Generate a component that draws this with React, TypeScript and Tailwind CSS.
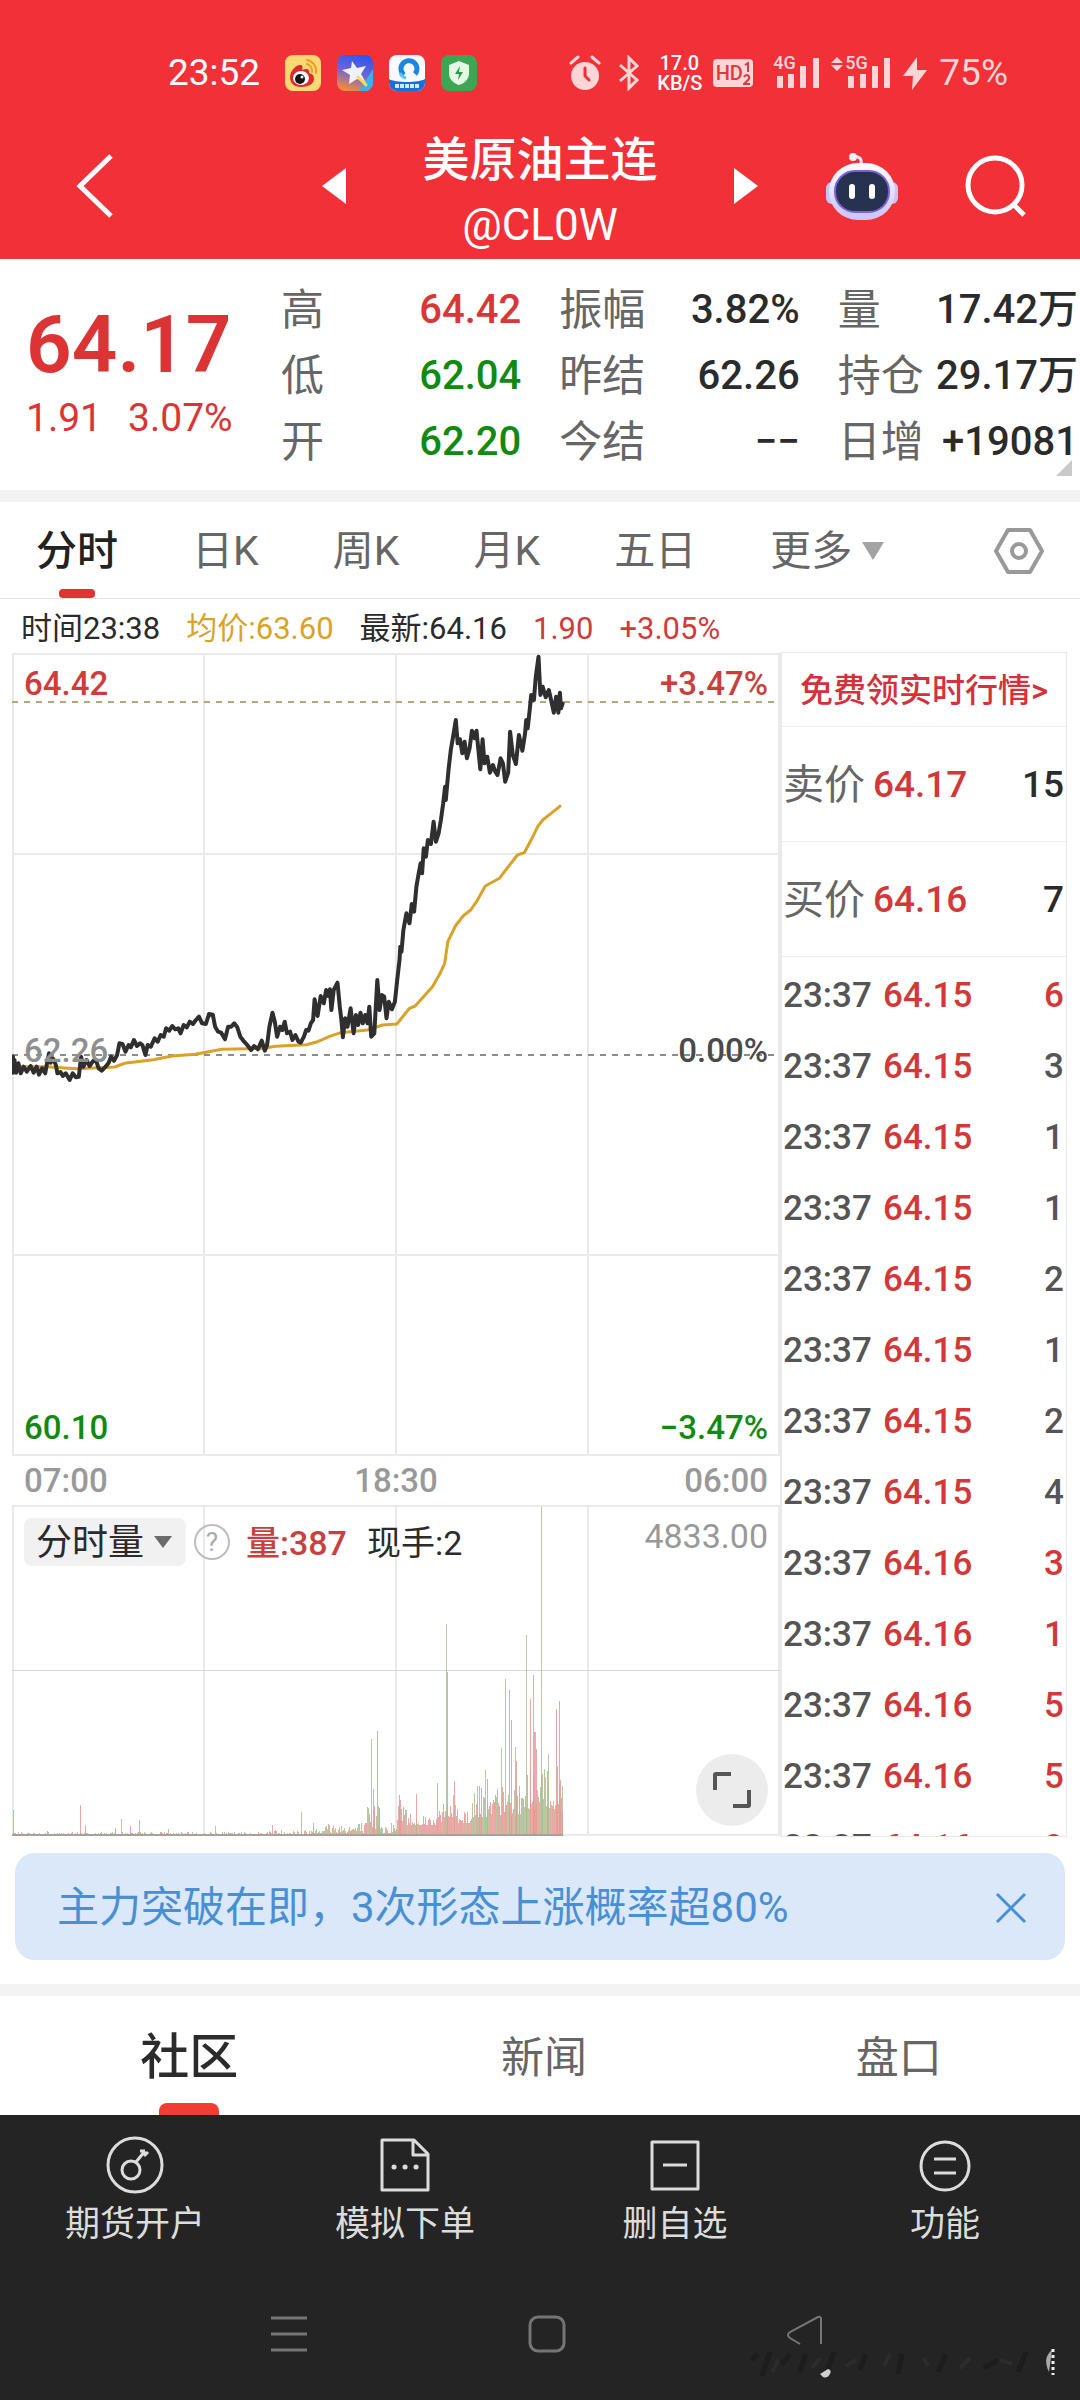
import React from 'react';

type Point = [number, number];

const stats = [
  [
    { label: '高', value: '64.42', color: 'text-[#d93636]' },
    { label: '低', value: '62.04', color: 'text-[#128a12]' },
    { label: '开', value: '62.20', color: 'text-[#128a12]' },
  ],
  [
    { label: '振幅', value: '3.82%', color: 'text-[#2b2b2b]' },
    { label: '昨结', value: '62.26', color: 'text-[#2b2b2b]' },
    { label: '今结', value: '−−', color: 'text-[#2b2b2b]' },
  ],
  [
    { label: '量', value: '17.42万', color: 'text-[#2b2b2b]' },
    { label: '持仓', value: '29.17万', color: 'text-[#2b2b2b]' },
    { label: '日增', value: '+19081', color: 'text-[#2b2b2b]' },
  ],
];

const ticks = [
  { price: '64.15', qty: 6, up: true },
  { price: '64.15', qty: 3, up: false },
  { price: '64.15', qty: 1, up: false },
  { price: '64.15', qty: 1, up: false },
  { price: '64.15', qty: 2, up: false },
  { price: '64.15', qty: 1, up: false },
  { price: '64.15', qty: 2, up: false },
  { price: '64.15', qty: 4, up: false },
  { price: '64.16', qty: 3, up: true },
  { price: '64.16', qty: 1, up: true },
  { price: '64.16', qty: 5, up: true },
  { price: '64.16', qty: 5, up: true },
  { price: '64.16', qty: 9, up: true },
];

// Raw series, scaled down to chart units by toPath
const priceSeries: Point[] = [
  [34, 1250], [34, 1298], [38, 1260], [42, 1298], [48, 1270], [54, 1300], [62, 1280], [70, 1295], [80, 1278], [88, 1298],
  [96, 1280], [102, 1304], [110, 1285], [118, 1300], [124, 1262], [128, 1240], [132, 1268], [138, 1255], [146, 1275], [150, 1300],
  [158, 1296], [164, 1308], [172, 1300], [182, 1320], [190, 1300], [198, 1312], [206, 1310], [212, 1250], [218, 1280], [226, 1260],
  [234, 1278], [244, 1262], [252, 1265], [258, 1285], [266, 1292], [276, 1280], [284, 1268], [290, 1250], [298, 1262], [306, 1245],
  [312, 1210], [320, 1212], [328, 1235], [336, 1215], [342, 1222], [350, 1200], [358, 1218], [366, 1210], [372, 1215], [380, 1245],
  [386, 1215], [394, 1220], [404, 1195], [412, 1205], [420, 1185], [428, 1190], [434, 1165], [442, 1172], [450, 1158], [458, 1168],
  [466, 1165], [472, 1180], [480, 1155], [488, 1162], [496, 1145], [504, 1152], [512, 1140], [520, 1130], [528, 1150], [538, 1152],
  [546, 1122], [556, 1124], [562, 1160], [570, 1175], [578, 1178], [588, 1198], [596, 1160], [604, 1160], [612, 1150], [620, 1162],
  [628, 1190], [638, 1205], [646, 1215], [656, 1230], [664, 1218], [674, 1228], [684, 1202], [692, 1232], [698, 1215], [704, 1160],
  [712, 1118], [718, 1145], [724, 1190], [732, 1160], [738, 1170], [744, 1145], [750, 1180], [758, 1175], [764, 1200], [772, 1185],
  [780, 1205], [786, 1208], [794, 1190], [800, 1170], [806, 1172], [812, 1150], [818, 1140], [822, 1078], [830, 1128], [838, 1068],
  [846, 1090], [852, 1050], [858, 1068], [862, 1048], [866, 1110], [872, 1050], [882, 1028], [888, 1100], [892, 1140], [896, 1192],
  [902, 1135], [908, 1160], [916, 1105], [924, 1180], [930, 1125], [936, 1155], [942, 1118], [948, 1150], [954, 1125], [960, 1150],
  [965, 1100], [970, 1190], [978, 1180], [986, 1020], [992, 1110], [998, 1065], [1004, 1070], [1010, 1135], [1016, 1085], [1024, 1108],
  [1032, 1085], [1038, 1020], [1044, 960], [1046, 920], [1049, 935], [1054, 870], [1062, 820], [1070, 850], [1076, 792], [1082, 815],
  [1088, 740], [1094, 700], [1099, 670], [1103, 700], [1107, 625], [1113, 650], [1118, 600], [1126, 612], [1133, 545], [1139, 605],
  [1146, 580], [1152, 540], [1158, 490], [1163, 440], [1165, 480], [1172, 390], [1178, 330], [1184, 290], [1191, 240], [1196, 310],
  [1202, 298], [1208, 340], [1214, 305], [1220, 355], [1227, 325], [1233, 272], [1240, 295], [1245, 272], [1250, 330], [1255, 388],
  [1261, 298], [1266, 370], [1273, 350], [1280, 398], [1288, 375], [1294, 395], [1300, 405], [1308, 355], [1314, 370], [1320, 425],
  [1328, 398], [1333, 275], [1340, 345], [1348, 372], [1356, 285], [1365, 332], [1372, 280], [1375, 240], [1379, 265], [1384, 210],
  [1388, 165], [1395, 180], [1400, 110], [1407, 50], [1412, 165], [1418, 140], [1426, 172], [1434, 150], [1440, 180], [1447, 218],
  [1453, 170], [1459, 218], [1463, 158], [1466, 205], [1470, 190],
];

const averageSeries: Point[] = [
  [34, 1280], [120, 1280], [200, 1286], [300, 1281], [325, 1270], [400, 1259], [450, 1248], [510, 1243], [580, 1228], [650, 1226],
  [690, 1225], [720, 1219], [800, 1214], [830, 1205], [860, 1190], [890, 1178], [960, 1170], [1000, 1155], [1037, 1152], [1070, 1105],
  [1085, 1098], [1130, 1040], [1150, 1000], [1162, 970], [1170, 905], [1190, 858], [1210, 828], [1230, 810], [1245, 785], [1268, 738],
  [1305, 715], [1320, 692], [1352, 645], [1370, 638], [1390, 595], [1405, 560], [1418, 540], [1440, 520], [1466, 496],
];

const toPath = (series: Point[]) =>
  series.map(([x, y]) => `${(x / 2.613 - 12).toFixed(1)},${(y / 3 - 12).toFixed(1)}`).join(' ');

// x, height, 1 = up (red) / 0 = down (green)
const spikes: [number, number, number][] = [
  [1, 26, 1], [35, 5, 1], [68, 31, 1], [73, 11, 1], [103, 8, 1], [109, 17, 0], [118, 10, 1], [127, 16, 1], [156, 7, 0],
  [203, 10, 0], [260, 11, 1], [289, 24, 0], [301, 13, 1], [359, 97, 0], [361, 47, 1], [362, 30, 1], [365, 105, 1], [366, 30, 0], [367, 28, 1],
  [387, 41, 1], [388, 36, 1], [404, 42, 1], [425, 53, 1], [434, 212, 0], [435, 164, 1], [442, 55, 1], [465, 50, 0], [467, 50, 1],
  [469, 48, 1], [473, 66, 0], [475, 57, 1], [489, 88, 0], [493, 157, 0], [497, 146, 1], [499, 116, 1], [503, 89, 0], [504, 75, 1],
  [507, 50, 0], [514, 201, 0], [518, 137, 1], [521, 161, 1], [522, 104, 1], [523, 104, 0], [524, 87, 1], [529, 329, 0], [530, 62, 0],
  [536, 82, 0], [535, 65, 1], [544, 127, 1], [545, 70, 0], [547, 135, 1], [548, 56, 1], [550, 24, 1],
];

const envelope = (x: number) => {
  if (x < 255) return 3;
  if (x < 300) return 6;
  if (x < 355) return 14;
  if (x < 363) return 30;
  if (x < 371) return 36;
  if (x < 385) return 14;
  if (x < 395) return 36;
  if (x < 407) return 24;
  if (x < 430) return 24;
  if (x < 446) return 42;
  if (x < 460) return 30;
  if (x < 482) return 44;
  if (x < 510) return 50;
  return 66;
};

const buildVolume = () => {
  const bars: [number, number, number][] = [];
  let seed = 7;
  const rand = () => {
    seed = (seed * 1103515245 + 12345) % 2147483648;
    return seed / 2147483648;
  };
  for (let x = 0; x < 551; x++) {
    const r = rand();
    const max = envelope(x);
    const base = x < 385 ? 0.15 : 0.4;
    const red = x > 385 && x < 450 ? 0.25 : 0.5;
    bars.push([x, Math.round(1 + max * base + max * (1 - base) * r * r), rand() > red ? 1 : 0]);
  }
  return bars.concat(spikes);
};

const volumeBars = buildVolume();

const StatusBar = () => (
  <div className="flex h-28 items-center pt-[34px] pl-[168px] pr-[72px] text-white">
    <span className="w-[93px] text-[37px] leading-10">23:52</span>
    <div className="ml-6 flex gap-4">
      <svg className="size-9" viewBox="0 0 36 36">
        <rect width="36" height="36" rx="8" fill="#fbd873" />
        <path d="M22 5a11 11 0 0 1 9 13M22 9a7 7 0 0 1 5 8" fill="none" stroke="#f29b2c" strokeWidth="2" strokeLinecap="round" />
        <path d="M5 22c0-6 6-12 10-12 3 0 3 2 2 5 5-2 8-1 7 3 4 1 5 3 5 6 0 5-6 8-13 8S5 28 5 22z" fill="#dd2a2c" />
        <ellipse cx="16" cy="23" rx="8" ry="7" fill="#fff" />
        <circle cx="15" cy="24" r="5" fill="#151515" />
        <circle cx="17" cy="22" r="1.5" fill="#fff" />
      </svg>
      <svg className="size-9" viewBox="0 0 36 36">
        <defs>
          <linearGradient id="starBg" x1="0.7" y1="0" x2="0.4" y2="1">
            <stop offset="0" stopColor="#2c56ee" />
            <stop offset="0.5" stopColor="#6d63d8" />
            <stop offset="1" stopColor="#f28a3c" />
          </linearGradient>
        </defs>
        <rect width="36" height="36" rx="8" fill="url(#starBg)" />
        <path d="M36 14v14a8 8 0 0 1-8 8h-6z" fill="#36b2ee" />
        <path d="M15 6l5 7 9-2-5 8 5 9-9-4-8 5 1-9-8-5 9-2z" fill="#eef3fb" />
        <path d="M21 22l8 8" stroke="#ffd95c" strokeWidth="3" strokeLinecap="round" />
      </svg>
      <svg className="size-9" viewBox="0 0 36 36">
        <rect width="36" height="36" rx="8" fill="#f7fbff" />
        <path d="M0 24c6 4 30 4 36 0v4a8 8 0 0 1-8 8H8a8 8 0 0 1-8-8z" fill="#1c6fd9" />
        <path d="M15 20a8 8 0 1 1 11-1" fill="none" stroke="#1a86e4" strokeWidth="5" />
        <path d="M11 18a8 8 0 0 0 6 5" fill="none" stroke="#5cc3f5" strokeWidth="3" />
        <path d="M6 31h24" stroke="#d7e9ff" strokeWidth="4" strokeDasharray="4 1" />
      </svg>
      <svg className="size-9" viewBox="0 0 36 36">
        <rect width="36" height="36" rx="8" fill="#3da653" />
        <path d="M18 6l10 4v8c0 6-4 10-10 12C12 28 8 24 8 18v-8z" fill="#e4f8e4" />
        <path d="M19 11l-5 8h4l-1 6 5-8h-4z" fill="#2f9a48" />
      </svg>
    </div>
    <div className="ml-auto flex items-center text-[#ffd5d6]">
      <svg className="h-9 w-8" viewBox="0 0 32 36">
        <circle cx="16" cy="21" r="14" fill="currentColor" />
        <path d="M2 8l7-6M30 8l-7-6" stroke="currentColor" strokeWidth="3" strokeLinecap="round" />
        <path d="M16 13v8l4 4" fill="none" stroke="#f03038" strokeWidth="3" strokeLinecap="round" />
      </svg>
      <svg className="ml-4 h-9 w-6" viewBox="0 0 24 36" fill="none" stroke="currentColor" strokeWidth="3">
        <path d="M3 10l17 15-8 8V3l8 8L3 26" />
      </svg>
      <div className="ml-4 w-11 text-center text-[20px] leading-5 font-medium text-white">
        <div>17.0</div>
        <div>KB/S</div>
      </div>
      <div className="ml-3 flex h-7 w-10 items-center justify-center rounded bg-[#ffd5d6] text-[#dd3a40]">
        <span className="text-[20px] leading-6 font-medium">HD</span>
        <svg className="h-6 w-2" viewBox="0 0 8 24" fill="none" stroke="currentColor" strokeWidth="2">
          <path d="M2 4l3-2v9M1 16q1-2 3-2 3 1 2 4l-5 5h6" />
        </svg>
      </div>
      <div className="relative ml-5">
        <svg className="h-9 w-12" viewBox="0 0 48 36" fill="currentColor">
          <path d="M4 21h6v12H4zM15 19h6v14h-6zM27 11h6v22h-6zM40 3h6v30h-6z" />
        </svg>
        <span className="absolute -top-0.5 left-0 text-[18px] leading-5 font-medium">4G</span>
      </div>
      <div className="relative ml-2.5">
        <svg className="h-9 w-[62px]" viewBox="0 0 62 36" fill="currentColor">
          <path d="M6 2l6 6H0zM6 16l6-6H0zM17 21h6v12h-6zM29 19h6v14h-6zM41 11h6v22h-6zM53 3h6v30h-6z" />
        </svg>
        <span className="absolute -top-0.5 left-3.5 text-[18px] leading-5 font-medium">5G</span>
      </div>
      <svg className="ml-2.5 h-9 w-6" viewBox="0 0 24 36" fill="currentColor">
        <path d="M14 2L0 21h10L9 35l15-20H14z" />
      </svg>
      <span className="ml-3 text-[37px] leading-10">75%</span>
    </div>
  </div>
);

const Header = () => (
  <header className="bg-[#f13037]">
    <StatusBar />
    <div className="grid h-[147px] grid-cols-[1fr_auto_1fr] items-center">
      <button aria-label="返回" className="ml-[75px] w-10">
        <svg className="h-16 w-10" viewBox="0 0 40 64" fill="none" stroke="#fff" strokeWidth="5">
          <path d="M36 2L5 32l31 30" />
        </svg>
      </button>
      <div className="flex w-[436px] items-center justify-between text-white">
        <button aria-label="上一个">
          <svg className="h-9 w-6" viewBox="0 0 24 36" fill="#fff"><path d="M24 0v36L0 18z" /></svg>
        </button>
        <div className="pt-2.5 text-center">
          <h1 className="text-[47px] leading-[68px] font-medium">美原油主连</h1>
          <div className="text-[44px] leading-[62px]">@CL0W</div>
        </div>
        <button aria-label="下一个">
          <svg className="h-9 w-6" viewBox="0 0 24 36" fill="#fff"><path d="M0 0v36l24-18z" /></svg>
        </button>
      </div>
      <div className="flex items-center justify-end gap-[66px] pr-[52px]">
        <button aria-label="智能助手">
          <svg className="h-[68px] w-[72px]" viewBox="0 0 72 68">
            <defs>
              <linearGradient id="botHead" x1="0" y1="0" x2="0" y2="1">
                <stop offset="0" stopColor="#ffffff" />
                <stop offset="1" stopColor="#c9c3fb" />
              </linearGradient>
            </defs>
            <path d="M35 12c1-5-1-7-7-8" fill="none" stroke="#f3e8f6" strokeWidth="3" />
            <circle cx="27" cy="5" r="4" fill="#f6eef8" />
            <rect x="0" y="30" width="12" height="22" rx="6" fill="#c9c3fb" />
            <rect x="60" y="30" width="12" height="22" rx="6" fill="#c9c3fb" />
            <rect x="3" y="11" width="66" height="57" rx="29" fill="url(#botHead)" />
            <rect x="9" y="19" width="54" height="41" rx="20" fill="#26324f" stroke="#7b62d8" strokeWidth="2" />
            <rect x="23" y="32" width="6" height="15" rx="3" fill="#fff" />
            <rect x="43" y="32" width="6" height="15" rx="3" fill="#fff" />
          </svg>
        </button>
        <button aria-label="搜索">
          <svg className="size-16" viewBox="0 0 64 64" fill="none" stroke="#fff" strokeWidth="5">
            <circle cx="31" cy="31" r="27" />
            <path d="M49 50l11 11" />
          </svg>
        </button>
      </div>
    </div>
  </header>
);

const Quote = () => (
  <section className="relative flex h-[231px] pt-[18px]">
    <div className="w-[281px] shrink-0 pl-[26px] text-[#dc3434]">
      <div className="pt-5 text-[80px] leading-[96px] font-semibold">64.17</div>
      <div className="flex gap-[26px] text-[39px] leading-[50px]">
        <span>1.91</span>
        <span>3.07%</span>
      </div>
    </div>
    <div className="grid flex-1 grid-cols-3 gap-x-[38px] pr-0.5">
      {stats.map((column, i) => (
        <dl key={i}>
          {column.map((item) => (
            <div key={item.label} className="flex h-[66px] items-center justify-between whitespace-nowrap">
              <dt className="text-[43px] leading-[60px] text-[#666]">{item.label}</dt>
              <dd className={`text-[40px] leading-[60px] font-medium ${item.color}`}>{item.value}</dd>
            </div>
          ))}
        </dl>
      ))}
    </div>
    <svg className="absolute right-2 bottom-3.5 size-4" viewBox="0 0 16 16" fill="#c9c9c9"><path d="M16 0v16H0z" /></svg>
  </section>
);

const PeriodTabs = () => (
  <nav className="flex h-[97px] items-center gap-[74px] border-b border-[#e6e6e6] pt-0.5 pl-9 pr-9 text-[41px] leading-[60px] text-[#666]">
    <button className="relative flex h-full items-center font-medium text-[#222]">
      分时
      <span className="absolute bottom-0 left-1/2 h-[9px] w-9 -translate-x-1/2 rounded bg-[#e03434]" />
    </button>
    <button>日K</button>
    <button>周K</button>
    <button>月K</button>
    <button>五日</button>
    <button className="flex items-center gap-2.5">
      更多
      <svg className="h-[18px] w-[22px]" viewBox="0 0 22 18" fill="#a3a3a3"><path d="M0 0h22L11 18z" /></svg>
    </button>
    <button aria-label="设置" className="ml-auto">
      <svg className="h-12 w-[50px]" viewBox="0 0 50 48" fill="none" stroke="#999" strokeWidth="4" strokeLinejoin="round">
        <path d="M14 3h22l12 21-12 21H14L2 24z" />
        <circle cx="25" cy="24" r="7" />
      </svg>
    </button>
  </nav>
);

const PriceChart = () => (
  <div className="relative h-[804px] text-[33px] leading-10 font-medium">
    <svg className="block h-full w-full" viewBox="0 0 768 804" preserveAspectRatio="none" fill="none">
      <path
        d="M1 2V804M192 2V804M384 2V804M576 2V804M767 2V804M0 2H768M0 202H768M0 603H768M0 803H768"
        stroke="#eaeaea"
        strokeWidth="2"
      />
      <path d="M0 50H764" stroke="#b3a878" strokeWidth="2" strokeDasharray="6 6" />
      <path d="M0 403H764" stroke="#8c8c8c" strokeWidth="2" strokeDasharray="6 6" />
      <polyline points={toPath(averageSeries)} stroke="#d9a229" strokeWidth="3" strokeLinejoin="round" />
      <polyline points={toPath(priceSeries)} stroke="#2f2f2f" strokeWidth="4" strokeLinejoin="round" strokeLinecap="round" />
    </svg>
    <span className="absolute top-3 left-3 text-[#d03b3b]">64.42</span>
    <span className="absolute top-3 right-3 text-[#c93f3f]">+3.47%</span>
    <span className="absolute top-[379px] left-3 text-[#8f8f8f]">62.26</span>
    <span className="absolute top-[379px] right-3 text-[#4a4a4a]">0.00%</span>
    <span className="absolute bottom-2 left-3 text-[#128a12]">60.10</span>
    <span className="absolute right-3 bottom-2 text-[#128a12]">−3.47%</span>
  </div>
);

const VolumeChart = () => (
  <div className="relative h-[331px] text-[34px] leading-10">
    <svg className="block h-full w-full" viewBox="0 0 768 331" preserveAspectRatio="none">
      <path
        d="M1 0V331M192 0V331M384 0V331M576 0V331M767 0V331M0 1H768M0 330H768"
        stroke="#eaeaea"
        strokeWidth="2"
      />
      <path d="M0 165.500H768" stroke="#d6d9d6" />
      {volumeBars.map(([x, h, up], i) => (
        <rect key={i} x={x} y={331 - h} width="1" height={h} fill={up ? '#e39a96' : '#b0bc90'} opacity="0.85" />
      ))}
      <path d="M0 330H551" stroke="#a8a09a" strokeWidth="2" />
    </svg>
    <div className="absolute top-3 right-3 left-3 flex items-center text-[#2b2b2b]">
      <div className="relative">
        <select
          aria-label="副图指标"
          className="block h-12 w-[162px] appearance-none rounded-lg bg-[#f1f1f1] pt-0.5 pl-3 text-[36px] leading-[46px]"
        >
          <option>分时量</option>
        </select>
        <svg className="pointer-events-none absolute top-[18px] right-3.5 h-3 w-[18px]" viewBox="0 0 18 12" fill="#6b6b6b">
          <path d="M0 0h18L9 12z" />
        </svg>
      </div>
      <button aria-label="说明" className="ml-2 flex size-9 items-center justify-center rounded-full border-2 border-[#bdbdbd] text-[26px] leading-8 text-[#aaa]">
        ?
      </button>
      <span className="ml-4 pt-0.5 leading-[48px] font-medium text-[#c93f3f]">量:387</span>
      <span className="ml-5 pt-0.5 leading-[48px]">现手:2</span>
      <span className="-mt-3 ml-auto text-[#999]">4833.00</span>
    </div>
    <button aria-label="全屏" className="absolute right-3 bottom-2.5 flex size-[72px] items-center justify-center rounded-full bg-[#ececec]">
      <svg className="size-10" viewBox="0 0 40 40" fill="none" stroke="#555" strokeWidth="4">
        <path d="M3 20V5q0-1 1-1h15M37 20v15q0 1-1 1H21" />
      </svg>
    </button>
  </div>
);

const TradePanel = () => (
  <aside className="h-[1185px] w-[287px] shrink-0 overflow-hidden border border-l-2 border-[#e9e9e9]">
    <a href="#realtime" className="block h-[74px] border-b border-[#ececec] text-center text-[33px] leading-[76px] font-medium text-[#d3323c]">
      免费领实时行情&gt;
    </a>
    {[
      { label: '卖价', price: '64.17', qty: 15 },
      { label: '买价', price: '64.16', qty: 7 },
    ].map((row) => (
      <div key={row.label} className="flex h-[115px] items-center border-b border-[#ececec] pt-0.5 pr-0.5 pl-px text-[37px] leading-[60px] font-medium">
        <span className="mr-2 text-[41px] font-normal text-[#666]">{row.label}</span>
        <span className="text-[#d33838]">{row.price}</span>
        <span className="ml-auto text-[#2b2b2b]">{row.qty}</span>
      </div>
    ))}
    <table className="mt-[3px] w-full text-[35px] leading-[71px] font-medium">
      <tbody>
        {ticks.map((tick, i) => (
          <tr key={i} className="h-[71px]">
            <td className="w-[101px] p-0 pl-px text-[#555]">23:37</td>
            <td className="p-0 text-[#d33838]">{tick.price}</td>
            <td className={`p-0 pr-0.5 text-right ${tick.up ? 'text-[#d33838]' : 'text-[#555]'}`}>{tick.qty}</td>
          </tr>
        ))}
      </tbody>
    </table>
  </aside>
);

const MarketChart = () => (
  <section>
    <div className="flex h-[53px] items-center gap-[26px] pt-1.5 pl-[21px] text-[31px] leading-10 text-[#2b2b2b]">
      <span>时间23:38</span>
      <span className="text-[#d9a229]">均价:63.60</span>
      <span>最新:64.16</span>
      <span className="text-[#d03b3b]">1.90</span>
      <span className="text-[#d03b3b]">+3.05%</span>
    </div>
    <div className="flex pr-[13px] pl-3">
      <div className="min-w-0 flex-1">
        <PriceChart />
        <div className="grid h-[49px] grid-cols-3 items-center px-3 text-[33px] leading-10 font-medium text-[#999]">
          <span>07:00</span>
          <span className="text-center">18:30</span>
          <span className="text-right">06:00</span>
        </div>
        <VolumeChart />
      </div>
      <TradePanel />
    </div>
  </section>
);

const Banner = () => (
  <div className="mx-[15px] mt-4 mb-6 flex h-[107px] items-center justify-between rounded-[20px] bg-[#dae8fa] pt-0.5 pr-[38px] pl-[42px] text-[#4a8fd3]">
    <span className="text-[42px] leading-[60px]">主力突破在即，3次形态上涨概率超80%</span>
    <button aria-label="关闭">
      <svg className="size-8" viewBox="0 0 32 32" fill="none" stroke="currentColor" strokeWidth="3"><path d="M2 2l28 28M30 2L2 30" /></svg>
    </button>
  </div>
);

const SectionTabs = () => (
  <nav className="grid h-[119px] grid-cols-3 pr-1 pl-3 text-[43px] leading-[60px] text-[#666]">
    <button className="relative pt-1 text-[49px] font-medium text-[#2b2b2b]">
      社区
      <span className="absolute bottom-0 left-1/2 h-3 w-[60px] -translate-x-1/2 rounded-t-lg bg-[#f23d32]" />
    </button>
    <button className="pt-1">新闻</button>
    <button className="pt-1">盘口</button>
  </nav>
);

const actions = [
  {
    label: '期货开户',
    icon: (
      <>
        <circle cx="30" cy="30" r="27" />
        <circle cx="26" cy="35" r="9" />
        <path d="M31 27l9-11M35 16l5 0M39 21l4-4" />
      </>
    ),
  },
  {
    label: '模拟下单',
    icon: (
      <>
        <path d="M7 5h32l14 14v36H7zM38 5v15h15" />
        <path d="M19 32h.1M30 32h.1M41 32h.1" strokeWidth="5" strokeLinecap="round" />
      </>
    ),
  },
  {
    label: '删自选',
    icon: <path d="M7 7h46v47H7zM18 30h24" />,
  },
  {
    label: '功能',
    icon: (
      <>
        <circle cx="30" cy="31" r="24" />
        <path d="M19 24h22M19 38h22" />
      </>
    ),
  },
];

const BottomBar = () => (
  <footer className="relative bg-[#242424]">
    <div className="grid grid-cols-4 pt-5 text-[35px] leading-[52px] text-[#dcdcdc]">
      {actions.map((action) => (
        <button key={action.label} className="flex flex-col items-center gap-1">
          <svg className="size-[60px]" viewBox="0 0 60 60" fill="none" stroke="currentColor" strokeWidth="3" strokeLinejoin="round">
            {action.icon}
          </svg>
          <span>{action.label}</span>
        </button>
      ))}
    </div>
    <div className="mt-[63px] flex h-[88px] justify-center gap-[218px] pl-3.5 text-[#757575]">
      <button aria-label="最近任务" className="h-10">
        <svg className="size-10" viewBox="0 0 40 40" stroke="currentColor" strokeWidth="3"><path d="M2 4h36M2 20h36M2 36h36" /></svg>
      </button>
      <button aria-label="主屏幕" className="h-10">
        <svg className="size-10" viewBox="0 0 40 40" fill="none" stroke="currentColor" strokeWidth="3">
          <rect x="3" y="3" width="34" height="34" rx="8" />
        </svg>
      </button>
      <button aria-label="返回" className="h-10">
        <svg className="size-10" viewBox="0 0 40 40" fill="none" stroke="currentColor" strokeWidth="2">
          <path d="M36 30V5q0-3-3-2L5 18q-4 3 0 6l10 6" />
        </svg>
      </button>
    </div>
    {/* faded stamp in the corner */}
    <svg className="absolute right-6 bottom-5 h-10 w-[308px]" viewBox="0 0 308 40" fill="none">
      <path d="M4 18l6-6M14 34l8-24M34 22l8-10M52 30l6-18M78 32l8-22M112 28l6-16M150 32l4-20M190 30l8-18M236 26l14-8M270 30l8-20" stroke="#1d1d1d" strokeWidth="5" />
      <path d="M24 30l6-12M64 26l8-10M98 24l10-6M136 24l6-12M176 16l4 8M212 26l10-10M252 18l12 4" stroke="#2c2c2c" strokeWidth="4" />
      <path d="M72 32l8-5q4 1 2 5-3 5-7 3z" fill="#d0d0d0" />
      <path d="M304 8q-10 8-3 22z" fill="#a9a9a9" />
      <path d="M305 7v26" stroke="#eee" strokeWidth="3" strokeDasharray="3 3" />
    </svg>
  </footer>
);

const App: React.FC = () => {
  return (
    <div lang="zh-CN" className="w-full overflow-hidden bg-white font-[Roboto,'Noto_Sans_CJK_SC',sans-serif]">
      <Header />
      <Quote />
      <div className="h-3 bg-[#f3f3f3]" />
      <PeriodTabs />
      <MarketChart />
      <Banner />
      <div className="h-3 bg-[#f3f3f3]" />
      <SectionTabs />
      <BottomBar />
    </div>
  );
};

export default App;
